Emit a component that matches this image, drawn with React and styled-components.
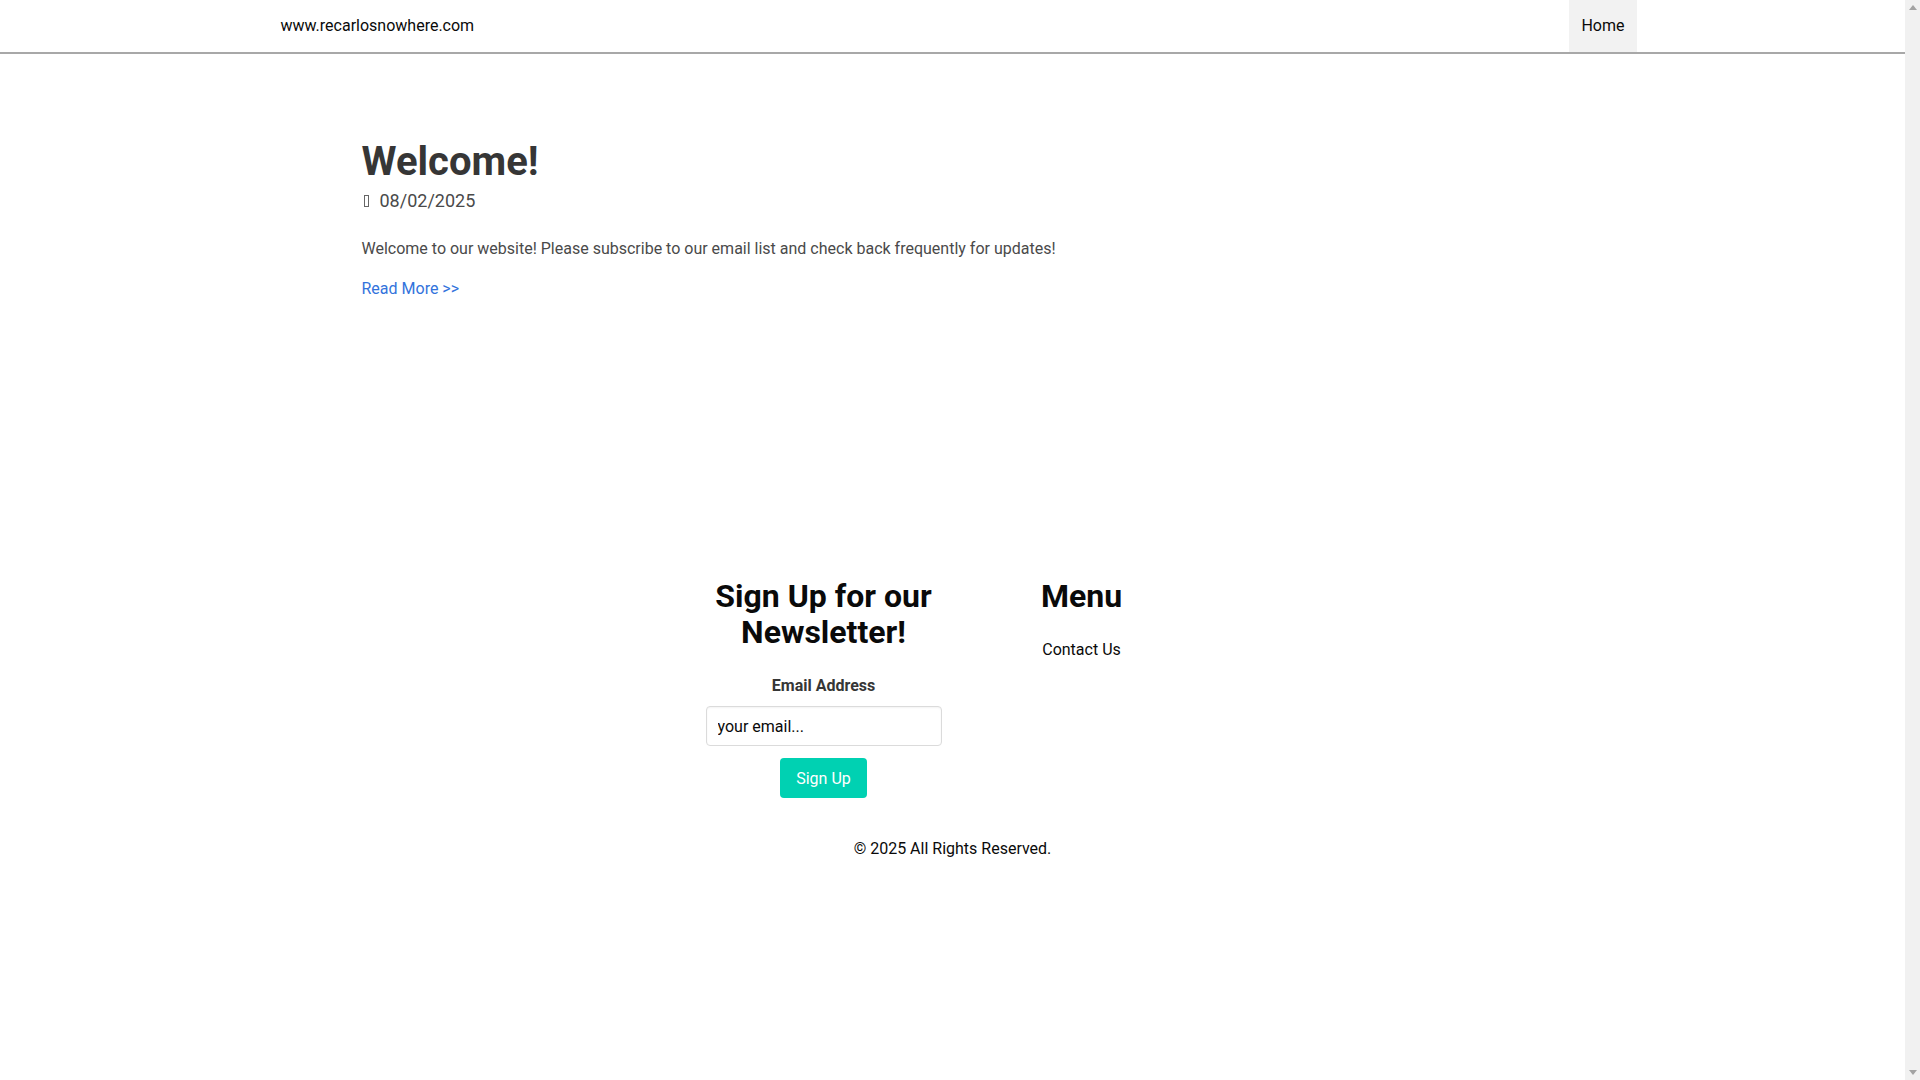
import React from "react";
import styled, { createGlobalStyle } from "styled-components";

const GlobalStyle = createGlobalStyle`
  html {
    background: #fff;
  }
  body {
    margin: 0 15px 0 0;
    font-family: Roboto, "Liberation Sans", sans-serif;
    font-size: 16px;
    line-height: 1.5;
    color: #4a4a4a;
  }
  * {
    box-sizing: border-box;
  }
`;

/* the screenshot shows an always-on, empty scrollbar gutter */
const Gutter = styled.div`
  position: fixed;
  top: 0;
  right: 0;
  bottom: 0;
  width: 15px;
  background: #f1f1f1;
  display: flex;
  flex-direction: column;
  justify-content: space-between;
  align-items: center;
  padding: 5px 0;
`;

const Arrow = ({ down }) => (
  <svg width="8" height="5" viewBox="0 0 8 5">
    <path d={down ? "M0 0h8L4 5z" : "M0 5h8L4 0z"} fill="#a3a3a3" />
  </svg>
);

const Navbar = styled.nav`
  height: 54px;
  border-bottom: 2px solid #a8a8a8;
  background: #fff;
`;

const NavContainer = styled.div`
  max-width: 1344px;
  height: 52px;
  margin: 0 auto;
  display: flex;
  justify-content: space-between;
  align-items: stretch;
`;

const NavItem = styled.a`
  display: flex;
  align-items: center;
  padding: 0 12px;
  margin: ${(p) => (p.$brand ? "0 0 0 -12px" : "0 -12px 0 0")};
  color: #0a0a0a;
  text-decoration: none;
  font-size: 16px;
  background: ${(p) => (p.$active ? "#f2f2f2" : "transparent")};
`;

const Main = styled.main`
  max-width: 1184px;
  margin: 0 auto;
  padding: 85px 0 0 1px;
  min-height: 524px;
`;

const Title = styled.h1`
  margin: 0;
  font-size: 40px;
  line-height: 45px;
  font-weight: 700;
  color: #363636;
`;

const DateLine = styled.div`
  display: flex;
  align-items: center;
  margin-top: 3px;
  font-size: 18px;
  line-height: 27px;
  color: #4a4a4a;
`;

const MissingIcon = styled.span`
  display: inline-block;
  width: 5px;
  height: 12px;
  border: 1px solid #666;
  margin: 0 11px 0 2px;
`;

const Text = styled.p`
  margin: 23px 0 16px;
  font-size: 16px;
  line-height: 24px;
`;

const ReadMore = styled.a`
  color: #3273dc;
  text-decoration: none;
  font-size: 16px;
  line-height: 24px;
`;

const Footer = styled.footer`
  padding: 0 0 96px;
  text-align: center;
`;

const Columns = styled.div`
  display: flex;
  justify-content: center;
`;

const Column = styled.div`
  width: 258px;
  display: flex;
  flex-direction: column;
  align-items: center;
`;

const FooterTitle = styled.h2`
  margin: 0 0 24px;
  font-size: 32px;
  line-height: 36px;
  font-weight: 700;
  color: #0a0a0a;
`;

const Label = styled.label`
  display: block;
  margin-bottom: 8px;
  font-weight: 700;
  color: #363636;
`;

const Input = styled.input`
  width: 236px;
  height: 40px;
  padding: 0 11px;
  border: 1px solid #dbdbdb;
  border-radius: 4px;
  box-shadow: inset 0 1px 2px rgba(10, 10, 10, 0.05);
  font-family: inherit;
  font-size: 16px;
  color: #0a0a0a;
  outline: none;
`;

const Button = styled.button`
  margin-top: 12px;
  height: 40px;
  padding: 0 15px;
  border: 1px solid transparent;
  border-radius: 4px;
  background: #00d1b2;
  color: #fff;
  font-family: inherit;
  font-size: 16px;
  cursor: pointer;
`;

const MenuLink = styled.a`
  color: #0a0a0a;
  text-decoration: none;
`;

const Copyright = styled.p`
  margin: 39px 0 0;
  color: #0a0a0a;
`;

export default function App() {
  return (
    <>
      <GlobalStyle />
      <Navbar>
        <NavContainer>
          <NavItem $brand href="#">www.recarlosnowhere.com</NavItem>
          <NavItem $active href="#">Home</NavItem>
        </NavContainer>
      </Navbar>
      <Main>
        <Title>Welcome!</Title>
        <DateLine>
          <MissingIcon />
          08/02/2025
        </DateLine>
        <Text>
          Welcome to our website! Please subscribe to our email list and check back frequently for updates!
        </Text>
        <ReadMore href="#">Read More &gt;&gt;</ReadMore>
      </Main>
      <Footer>
        <Columns>
          <Column>
            <FooterTitle>
              Sign Up for our
              <br />
              Newsletter!
            </FooterTitle>
            <Label htmlFor="email">Email Address</Label>
            <Input id="email" defaultValue="your email..." />
            <Button>Sign Up</Button>
          </Column>
          <Column>
            <FooterTitle>Menu</FooterTitle>
            <MenuLink href="#">Contact Us</MenuLink>
          </Column>
        </Columns>
        <Copyright>© 2025 All Rights Reserved.</Copyright>
      </Footer>
      <Gutter>
        <Arrow />
        <Arrow down />
      </Gutter>
    </>
  );
}
